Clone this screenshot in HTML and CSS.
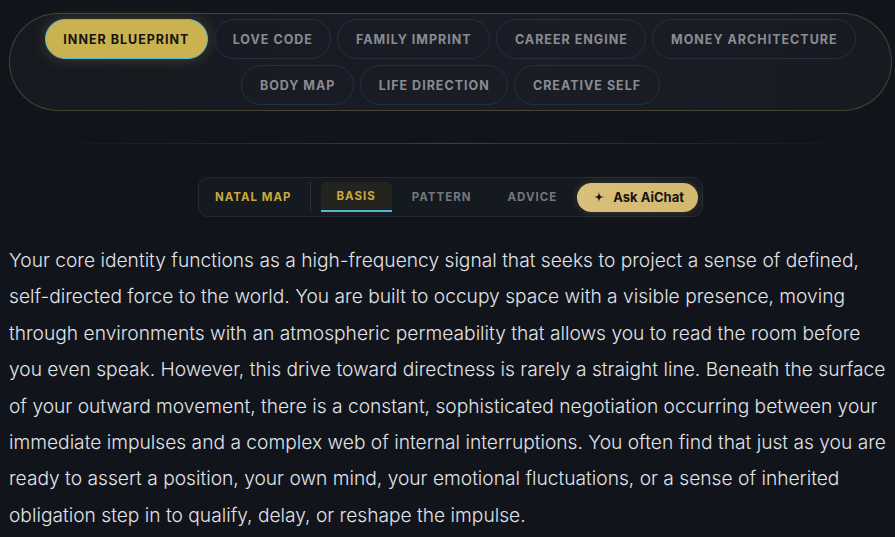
FILE: index.html
```html
<!DOCTYPE html>
<html>
<head>
<meta charset="UTF-8">
<title>Inner Blueprint</title>
<link rel="stylesheet" href="styles.css">
</head>
<body>
	<div class="page">
		<nav class="topics">
			<div class="chip active">Inner Blueprint</div>
			<div class="chip">Love Code</div>
			<div class="chip">Family Imprint</div>
			<div class="chip">Career Engine</div>
			<div class="chip">Money Architecture</div>
			<div class="chip">Body Map</div>
			<div class="chip">Life Direction</div>
			<div class="chip">Creative Self</div>
		</nav>

		<div class="rule"></div>

		<div class="tabs-wrap">
			<div class="tabs">
				<div class="tab natal">Natal Map</div>
				<div class="sep"></div>
				<div class="tab current">Basis</div>
				<div class="tab">Pattern</div>
				<div class="tab">Advice</div>
				<div class="ask">
					<svg width="12" height="12" viewBox="0 0 12 12"><path d="M6 0.5 C6.2 4.6 7.4 5.8 11.5 6 C7.4 6.2 6.2 7.4 6 11.5 C5.8 7.4 4.6 6.2 0.5 6 C4.6 5.8 5.8 4.6 6 0.5 Z" fill="#14130f"/></svg>
					<span>Ask AiChat</span>
				</div>
			</div>
		</div>

		<p class="reading">Your core identity functions as a high-frequency signal that seeks to project a sense of defined, self-directed force to the world. You are built to occupy space with a visible presence, moving through environments with an atmospheric permeability that allows you to read the room before you even speak. However, this drive toward directness is rarely a straight line. Beneath the surface of your outward movement, there is a constant, sophisticated negotiation occurring between your immediate impulses and a complex web of internal interruptions. You often find that just as you are ready to assert a position, your own mind, your emotional fluctuations, or a sense of inherited obligation step in to qualify, delay, or reshape the impulse.</p>
	</div>
</body>
</html>
```

FILE: styles.css
```css
body {
	margin : 0;
	background : #11141b;
	font-family : Inter, "Noto Sans", sans-serif;
	color : #d6d9de;
}
.page {
	padding : 13px 0 0 9px;
}
.topics {
	display : flex;
	flex-wrap : wrap;
	justify-content : center;
	gap : 6px 6px;
	width : 883px;
	box-sizing : border-box;
	padding : 5px 20px;
	border : 1px solid rgba(160,140,80,0.35);
	border-radius : 50px;
	background : linear-gradient(100deg, #161920, #1a1d25 60%, #171a21);
}
.chip {
	height : 40px;
	box-sizing : border-box;
	display : flex;
	align-items : center;
	padding : 0 17.6px;
	border : 1px solid #1f3242;
	border-radius : 20px;
	font-size : 12.5px;
	font-weight : 700;
	letter-spacing : 1px;
	text-transform : uppercase;
	color : #8a8c92;
}
.chip.active {
	background : #cab250;
	border-color : #5bb7d6;
	color : #15140f;
	box-shadow : 0 0 14px rgba(202,178,80,0.25);
}
.rule {
	height : 1px;
	margin : 32px 30px 0 30px;
	background : linear-gradient(90deg, rgba(40,60,70,0), #274652 50%, rgba(40,60,70,0));
}
.tabs-wrap {
	display : flex;
	justify-content : center;
	padding : 33px 0 0 0;
	margin-left : -3px;
}
.tabs {
	display : flex;
	align-items : center;
	height : 40px;
	box-sizing : border-box;
	padding : 0 4px 0 16px;
	background : #151920;
	border : 1px solid #262a30;
	border-radius : 10px;
}
.tab {
	font-size : 11.5px;
	font-weight : 700;
	letter-spacing : 1px;
	text-transform : uppercase;
	color : #74777d;
	padding : 0 18px;
}
.tab.natal {
	color : #c9a93e;
	padding : 0 18px 0 0;
}
.sep {
	width : 1px;
	height : 30px;
	background : #2d3036;
	margin-right : 10px;
}
.tab.current {
	color : #c9a93e;
	height : 30px;
	line-height : 28px;
	box-sizing : border-box;
	padding : 0 16px;
	border-radius : 6px 6px 0 0;
	background : #24241f;
	border-bottom : 2px solid #52b2d6;
	margin-right : 2px;
}
.ask {
	display : flex;
	align-items : center;
	gap : 8px;
	height : 29px;
	padding : 0 14px 0 16px;
	border-radius : 15px;
	background : linear-gradient(90deg, #d9c07b, #d3b96f);
	box-shadow : 0 0 10px rgba(217,192,123,0.2);
	color : #14130f;
	font-size : 13px;
	font-weight : 700;
	margin-left : 2px;
}
.reading {
	margin : 25px 0 0 0;
	font-size : 19.2px;
	font-weight : 300;
	line-height : 36.4px;
	color : #e0e3e8;
}
```
